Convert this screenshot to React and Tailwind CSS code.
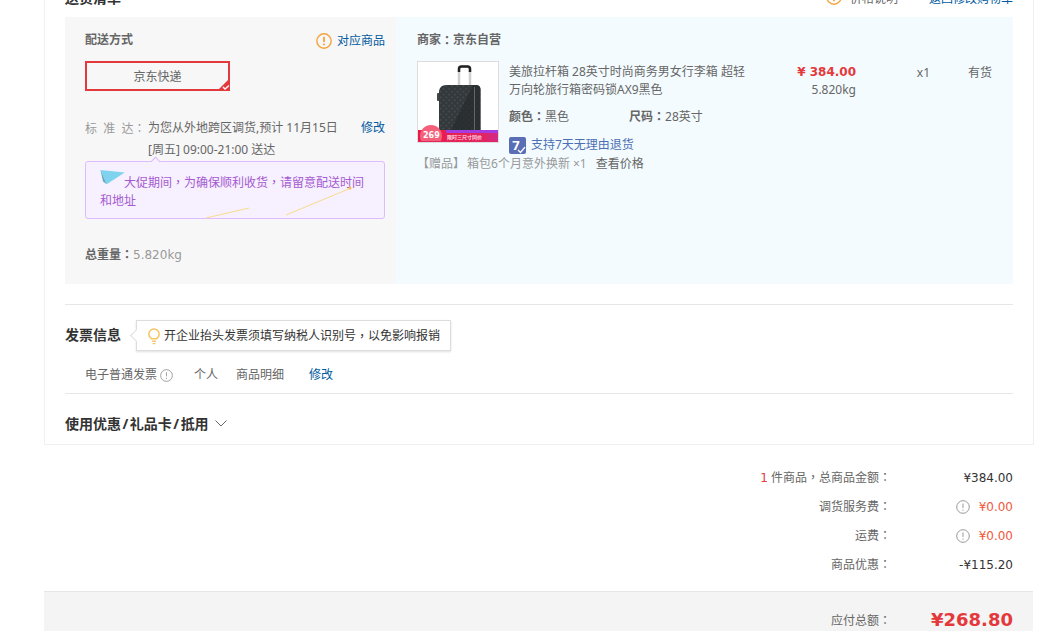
import React from "react";

const verdana = "font-['DejaVu_Sans','Noto_Sans_CJK_SC',sans-serif]";

// full width punctuation sits in the middle of its cell in the picture, TC font does that
const Colon = () => <span className="font-['Noto_Sans_CJK_TC',sans-serif]">：</span>;
const Comma = () => <span className="font-['Noto_Sans_CJK_TC',sans-serif]">，</span>;

const InfoIcon = ({ className = "" }) => (
  <svg viewBox="0 0 14 14" className={className}>
    <circle cx="7" cy="7" r="6.3" fill="none" stroke="#999" strokeWidth="1" />
    <path d="M7 3.5v4.5M7 9.5v1.2" stroke="#999" strokeWidth="1" fill="none" />
  </svg>
);

const WarnIcon = ({ className = "" }) => (
  <svg viewBox="0 0 16 16" className={className}>
    <circle cx="8" cy="8" r="7.2" fill="none" stroke="#f5a33c" strokeWidth="1.4" />
    <path d="M8 3.8v5.2M8 10.6v1.6" stroke="#f5a33c" strokeWidth="1.8" fill="none" />
  </svg>
);

const Suitcase = () => (
  <svg viewBox="0 0 80 80" className="w-[80px] h-[80px] block">
    <defs>
      <linearGradient id="band" x1="0" x2="1" y1="0" y2="0">
        <stop offset="0" stopColor="#ea1b45" />
        <stop offset="0.8" stopColor="#e2245f" />
        <stop offset="1" stopColor="#d22a8a" />
      </linearGradient>
      <pattern id="dots" width="4" height="4" patternUnits="userSpaceOnUse" patternTransform="rotate(45)">
        <rect width="4" height="4" fill="#33383a" />
        <rect width="2" height="2" fill="#40464a" />
      </pattern>
    </defs>
    <rect width="80" height="80" fill="#fff" />
    <path d="M41 26V7q0-2.500 2.500-2.500h6q2.500 0 2.500 2.500V26" fill="none" stroke="#cfcfcf" strokeWidth="2.500" />
    <path d="M41 10V7q0-2.500 2.500-2.500h6q2.500 0 2.500 2.500v3" fill="none" stroke="#222" strokeWidth="2.500" />
    <path d="M21 29q1-6 7-6h30q4 0 4.500 4V68H21z" fill="url(#dots)" />
    <path d="M33 68L55 23h3q4 0 4.500 4V68z" fill="#272c2e" opacity="0.75" />
    <rect x="19" y="31" width="2.500" height="8" rx="1" fill="#444" />
    <rect x="56" y="25" width="1" height="43" fill="#666" />
    <rect y="68" width="80" height="12" fill="url(#band)" />
    <rect x="28" y="68" width="52" height="3" fill="#a63be0" />
    <circle cx="13" cy="74" r="11" fill="#f4607c" />
    <rect y="79" width="80" height="1" fill="#e2245f" />
    <text x="5" y="76" fontSize="8" fontWeight="700" fill="#fff" fontFamily="DejaVu Sans">269</text>
    <text x="29" y="77" fontSize="5" fontWeight="700" fill="#ffd9e4" fontFamily="Noto Sans CJK SC">限时三尺寸同价</text>
  </svg>
);

const Row = ({ label, children, icon }) => (
  <div className="flex items-center justify-end h-[29px]">
    <span className="text-[#666] text-right">{label}<Colon /></span>
    <div className={`w-[122px] flex items-center justify-end ${verdana}`}>
      {icon && <InfoIcon className="w-[14px] h-[14px] mr-[9px]" />}
      {children}
    </div>
  </div>
);

export default function App() {
  return (
    <div className="h-[631px] overflow-hidden bg-white text-[12px] text-[#666] font-['Noto_Sans','Noto_Sans_CJK_SC',sans-serif]">
      <div className="ml-[44px] mr-[20px] border-x border-b border-[#f0f0f0] px-[20px] h-[445px]">
        <div className="flex justify-between h-[17px]">
          <span className="text-[14px] font-bold text-[#333] -mt-[13px]">送货清单</span>
          <div className="flex items-start -mt-[10px]">
            <WarnIcon className="w-[16px] h-[16px] mt-[-1px]" />
            <span className="ml-[8px] text-[#666]">价格说明</span>
            <span className="ml-[31px] text-[#005aa0]">返回修改购物车</span>
          </div>
        </div>

        <div className="flex h-[267px]">
          <div className="w-[331px] bg-[#f7f7f7] pl-[20px] pr-[11px] pt-[14px]">
            <div className="flex justify-between items-center h-[17px]">
              <span className="font-bold">配送方式</span>
              <div className="flex items-center pt-[3px]">
                <WarnIcon className="w-[16px] h-[16px] mr-[5px]" />
                <span className="text-[#005aa0]">对应商品</span>
              </div>
            </div>
            <div className="relative w-[145px] h-[30px] mt-[13px] pt-[1px] border-2 border-[#e4393c] flex items-center justify-center">
              京东快递
              <svg viewBox="0 0 13 13" className="absolute right-[-2px] bottom-[-2px] w-[13px] h-[13px]">
                <path d="M13 0v13H0z" fill="#e4393c" />
                <path d="M6 9l2 2 4-3.500" stroke="#fff" strokeWidth="1.300" fill="none" />
              </svg>
            </div>
            <div className="flex mt-[26px] leading-[22px]">
              <span className="w-[63px] shrink-0 text-[#999] whitespace-pre">标  准  达<Colon /></span>
              <span className="w-[213px] shrink-0">为您从外地跨区调货,预计 11月15日<br />[周五] 09:00-21:00 送达</span>
              <span className="text-[#005aa0] whitespace-nowrap">修改</span>
            </div>
            <div className="relative w-[300px] h-[58px] bg-[#f6f0ff] border border-[#dcbcff] rounded-[3px] px-[14px] pt-[11px] leading-[18px] text-[#a55ad0]">
              <span className="absolute left-[66px] -top-[4px] w-[7px] h-[7px] rotate-45 bg-[#f6f0ff] border-l border-t border-[#dcbcff]" />
              <svg viewBox="0 0 30 20" className="absolute left-[13px] top-[7px] w-[28px] h-[18px]">
                <path d="M1 1l27 3-20 13z" fill="#7fd3ef" />
                <path d="M1 1l7 16-4-3z" fill="#5fa9bd" />
              </svg>
              <svg viewBox="0 0 300 58" className="absolute left-0 top-0 w-[300px] h-[58px]">
                <path d="M120 56l43-10M200 53l65-27" stroke="#f8dd8a" strokeWidth="1" fill="none" />
                <circle cx="264" cy="26" r="1.500" fill="#f5c04a" />
              </svg>
              <span className="inline-block w-[24px]" />
              大促期间<Comma />为确保顺利收货<Comma />请留意配送时间和地址
            </div>
            <div className={`mt-[26px] text-[#999] ${verdana}`}>
              <span className="font-bold text-[#666]">总重量<Colon /></span>5.820kg
            </div>
          </div>

          <div className="flex-1 bg-[#f3fbfe] pl-[21px] pt-[14px]">
            <div className="font-bold h-[17px] flex items-center">商家<Colon />京东自营</div>
            <div className="flex mt-[13px]">
              <div className="w-[82px] h-[82px] border border-[#ddd] shrink-0">
                <Suitcase />
              </div>
              <div className="w-[240px] ml-[10px] leading-[18px] pt-[2px] shrink-0">
                <div>美旅拉杆箱 28英寸时尚商务男女行李箱 超轻万向轮旅行箱密码锁AX9黑色</div>
                <div className="flex mt-[8px]">
                  <span className="w-[120px]"><b>颜色<Colon /></b>黑色</span>
                  <span className="whitespace-nowrap"><b>尺码<Colon /></b>28英寸</span>
                </div>
                <div className="flex items-center mt-[10px] text-[#4c6fb5]">
                  <span className="relative w-[17px] h-[17px] mr-[5px] bg-[#5a6eb5] rounded-[2px] text-white text-[13px] font-bold flex items-center justify-center pr-[3px]">
                    7
                    <svg viewBox="0 0 9 8" className="absolute right-[0px] bottom-[0px] w-[9px] h-[8px]">
                      <path d="M1 4l2.500 2.500L8 1" stroke="#fff" strokeWidth="1.200" fill="none" />
                    </svg>
                  </span>
                  支持7天无理由退货
                </div>
              </div>
              <div className="w-[107px] text-right pt-[2px] leading-[18px] shrink-0">
                <div className={`text-[#e4393c] font-bold ${verdana}`}>¥ 384.00</div>
                <div>5.820kg</div>
              </div>
              <div className="w-[74px] text-right pt-[3px] leading-[18px] shrink-0">x1</div>
              <div className="w-[62px] text-right pt-[3px] leading-[18px] shrink-0">有货</div>
            </div>
            <div className="flex mt-[1px] leading-[18px]">
              <span className="text-[#999]">【赠品】</span>
              <span className="ml-[2px] text-[#999]">箱包6个月意外换新 ×1</span>
              <span className="ml-[9px]">查看价格</span>
            </div>
          </div>
        </div>

        <div className="border-t border-[#e6e6e6] mt-[20px]">
          <div className="flex items-center h-[60px]">
            <span className="text-[14px] font-bold text-[#333] mb-[2px]">发票信息</span>
            <div className="relative ml-[15px] h-[31px] px-[10px] pt-[2px] flex items-center bg-white border border-[#ddd] shadow-[0_1px_2px_rgba(0,0,0,0.12)] text-[#333]">
              <span className="absolute -left-[5px] top-[10px] w-[9px] h-[9px] rotate-45 bg-white border-l border-b border-[#ddd]" />
              <svg viewBox="0 0 14 18" className="w-[14px] h-[17px] mr-[3px]">
                <path d="M4.500 11.500C2.500 10 1.500 8.500 1.500 6.500a5.500 5.500 0 0 1 11 0c0 2-1 3.500-3 5z" fill="none" stroke="#f7c55f" strokeWidth="1.600" />
                <path d="M5 14h4M5.500 16.500h3" stroke="#f7c55f" strokeWidth="1.500" />
              </svg>
              开企业抬头发票须填写纳税人识别号<Comma />以免影响报销
            </div>
          </div>
          <div className="flex items-center h-[29px] pl-[20px] pb-[8px] border-b border-[#e6e6e6]">
            <span>电子普通发票</span>
            <InfoIcon className="w-[13px] h-[13px] ml-[3px]" />
            <span className="ml-[21px]">个人</span>
            <span className="ml-[18px]">商品明细</span>
            <span className="ml-[25px] text-[#005aa0]">修改</span>
          </div>
          <div className="flex items-center h-[50px] pt-[8px]">
            <span className="text-[14px] font-bold text-[#333]">
              使用优惠<span className="mx-[1.500px]">/</span>礼品卡<span className="mx-[1.500px]">/</span>抵用
            </span>
            <svg viewBox="0 0 12 7" className="w-[12px] h-[7px] ml-[6px]">
              <path d="M.5.500L6 6 11.500.500" fill="none" stroke="#666" strokeWidth="1" />
            </svg>
          </div>
        </div>
      </div>

      <div className="ml-[44px] mr-[21px] pr-[20px] pt-[18px] h-[146px]">
        <Row label={<><span className={`text-[#e4393c] ${verdana}`}>1</span> 件商品<Comma />总商品金额</>}>
          <span className="text-[#333]">¥384.00</span>
        </Row>
        <Row label="调货服务费" icon>
          <span className="text-[#f2573a]">¥0.00</span>
        </Row>
        <Row label="运费" icon>
          <span className="text-[#f2573a]">¥0.00</span>
        </Row>
        <Row label="商品优惠">
          <span className="text-[#333]">-¥115.20</span>
        </Row>
      </div>

      <div className="ml-[44px] mr-[21px] h-[60px] bg-[#f4f4f4] border-t border-[#e6e6e6] pr-[20px] flex items-start justify-end pt-[16px]">
        <span className="mt-[3px]">应付总额<Colon /></span>
        <span className={`w-[122px] text-right text-[18px] font-bold text-[#e4393c] leading-[24px] ${verdana}`}>¥268.80</span>
      </div>
    </div>
  );
}
